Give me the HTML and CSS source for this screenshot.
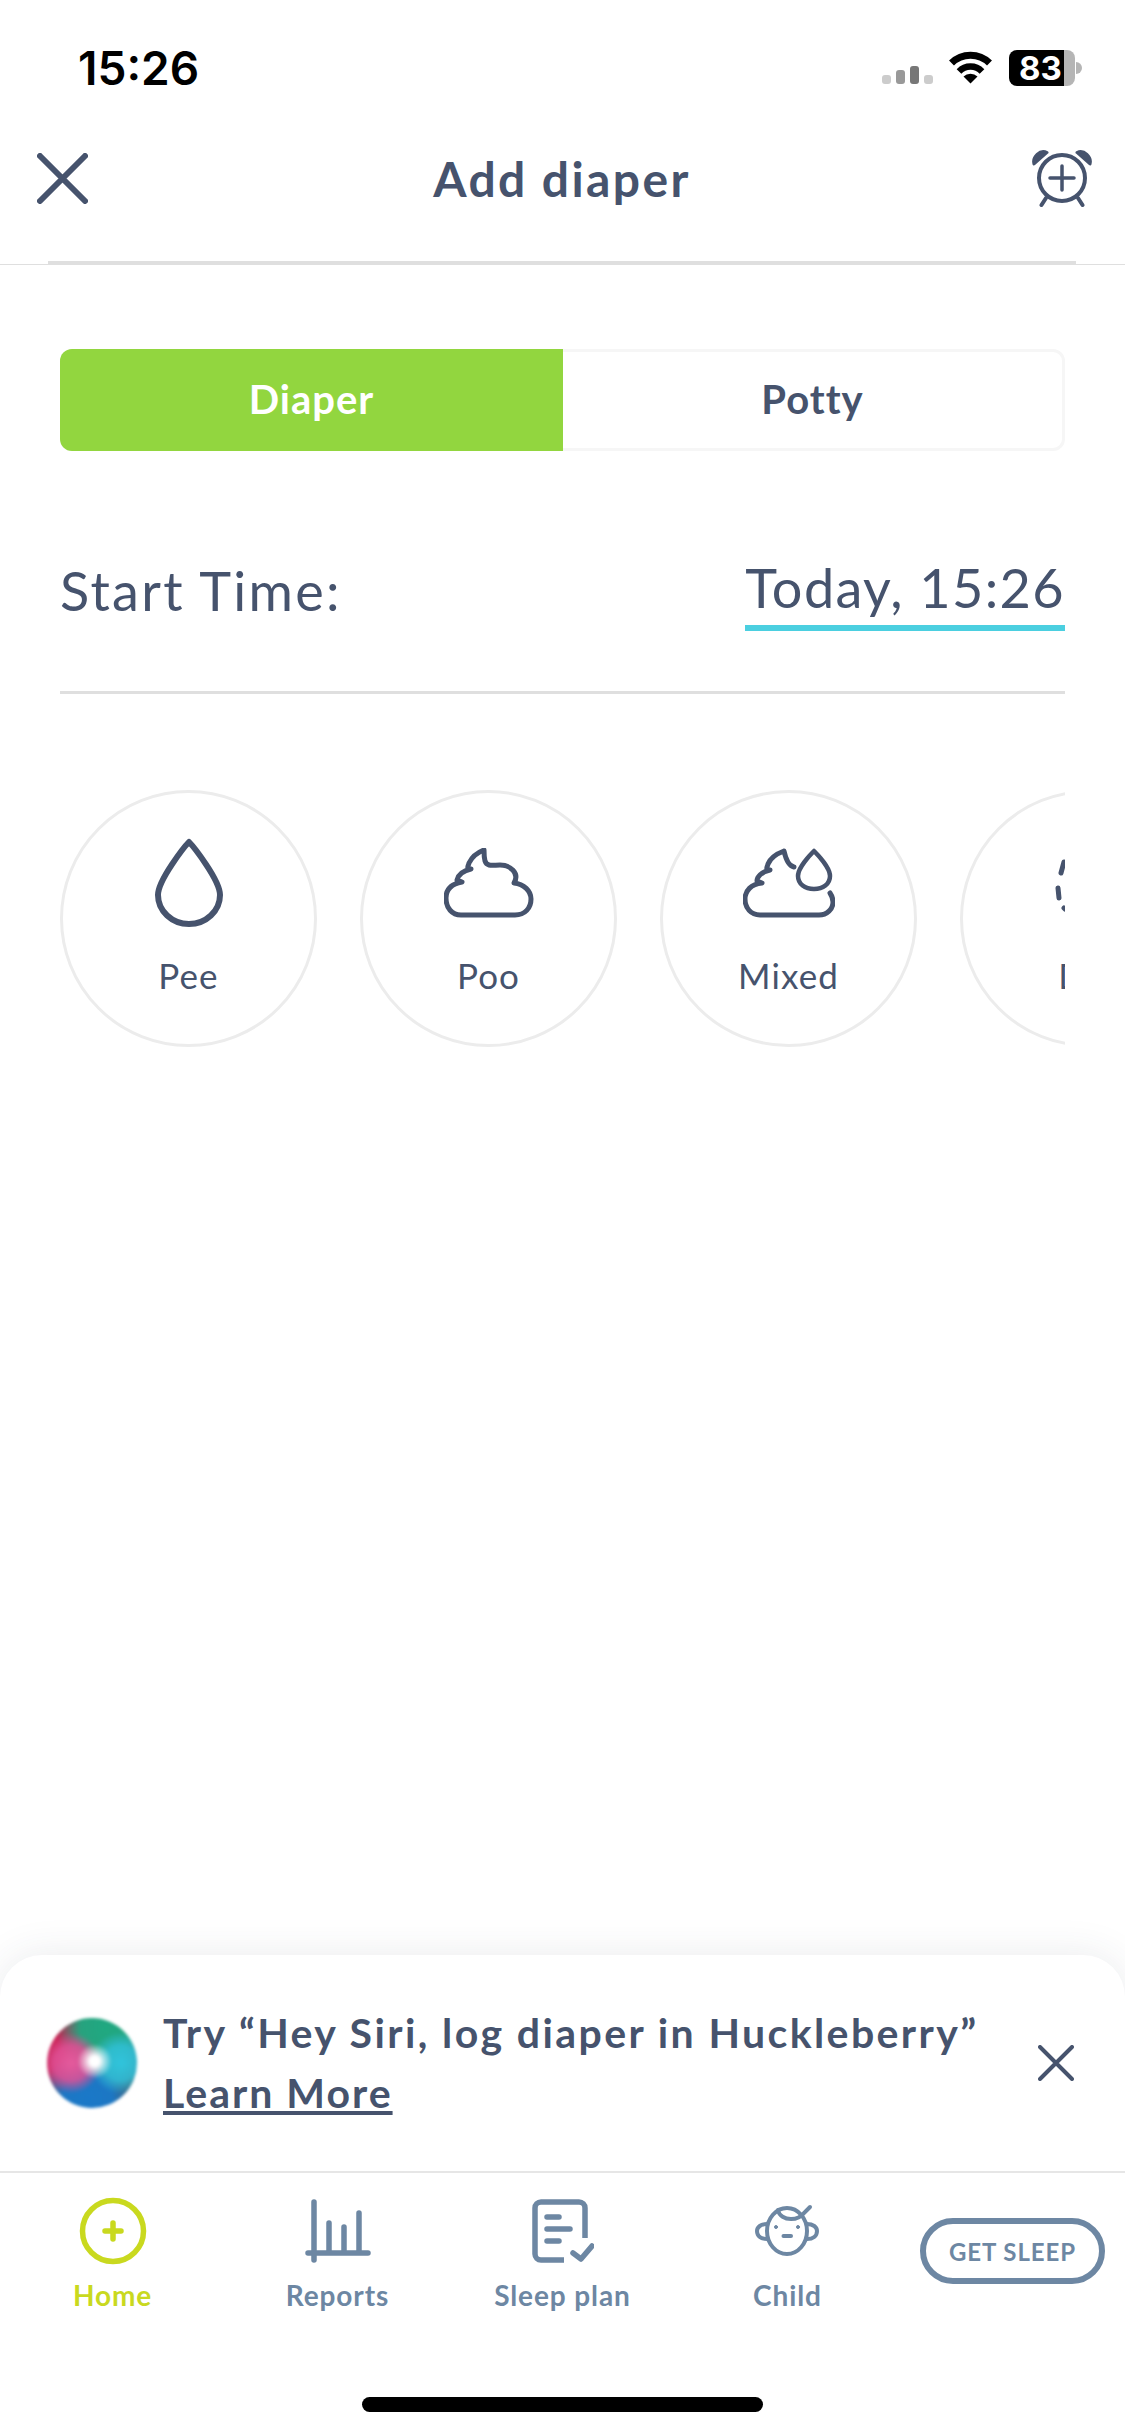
FILE: index.html
```html
<!DOCTYPE html>
<html lang="en">
<head>
  <meta charset="UTF-8">
  <meta name="viewport" content="width=device-width, initial-scale=1.0">
  <title>Add diaper</title>
  <link rel="stylesheet" href="styles.css">
</head>
<body>
  <div class="status-bar">
    <span class="status-time">15:26</span>
    <div class="status-icons">
      <div class="signal">
        <span class="signal-bar bar-1"></span>
        <span class="signal-bar bar-2"></span>
        <span class="signal-bar bar-3"></span>
        <span class="signal-bar bar-4"></span>
      </div>
      <svg class="wifi" width="45" height="34" viewBox="0 0 45 34">
        <path d="M3.5 13A27 27 0 0 1 41.5 13" fill="none" stroke="#000" stroke-width="7"/>
        <path d="M11 21.5A16 16 0 0 1 34 21.5" fill="none" stroke="#000" stroke-width="6.5"/>
        <path d="M22.5 33.5L15.5 26.5A10 10 0 0 1 29.5 26.5Z" fill="#000"/>
      </svg>
      <div class="battery">
        <span class="battery-body">83</span>
        <span class="battery-nub"></span>
      </div>
    </div>
  </div>

  <header class="top-bar">
    <svg class="icon-close" width="51" height="51" viewBox="0 0 51 51" fill="none" stroke="#46536d" stroke-width="6" stroke-linecap="round">
      <path d="M3 3L48 48M48 3L3 48"/>
    </svg>
    <h1 class="top-title">Add diaper</h1>
    <svg class="icon-alarm" width="60" height="58" viewBox="0 0 60 58" fill="none" stroke="#46536d" stroke-linecap="round">
      <circle cx="30" cy="29" r="23" stroke-width="4"/>
      <path d="M30 17V41M18 29H42" stroke-width="3.5"/>
      <path d="M14 49L9.500 56M46 49L50.500 56" stroke-width="4"/>
      <path d="M2 15C0 8 8 0 15 3.500Z" fill="#46536d" stroke-width="3" stroke-linejoin="round"/>
      <path d="M58 15C60 8 52 0 45 3.500Z" fill="#46536d" stroke-width="3" stroke-linejoin="round"/>
    </svg>
  </header>
  <div class="top-rule"></div>
  <div class="top-line"></div>

  <main class="content">
    <div class="segment">
      <div class="segment-item active">Diaper</div>
      <div class="segment-item">Potty</div>
    </div>

    <div class="time-row">
      <span class="time-label">Start Time:</span>
      <span class="time-value">Today, 15:26</span>
    </div>

    <div class="type-list">
      <div class="type-item">
        <div class="type-icon">
          <svg width="70" height="90" viewBox="0 0 70 90" fill="none" stroke="#46536d" stroke-width="6" stroke-linejoin="round">
            <path d="M35 4C31 8 4 42 4 57C4 73 18 86 35 86C52 86 66 73 66 57C66 42 39 8 35 4Z"/>
          </svg>
        </div>
        <span class="type-label">Pee</span>
      </div>
      <div class="type-item">
        <div class="type-icon">
          <svg width="90" height="70" viewBox="0 0 90 70" fill="none" stroke="#46536d" stroke-width="5" stroke-linejoin="round" stroke-linecap="round">
            <path d="M17 67H71C81 67 87 60 87 51C87 43 80 36 70 35C76 25 66 17 56 17C49 17 43 19 41 13C40 9 40 5 40 2C32 5 27 11 25 15C24 19 22 20 27 21C18 23 14 28 13 32L18 34C7 36 2 42 2 50C2 60 8 67 17 67Z"/>
          </svg>
        </div>
        <span class="type-label">Poo</span>
      </div>
      <div class="type-item">
        <div class="type-icon">
          <svg width="92" height="70" viewBox="0 0 92 70" fill="none" stroke="#46536d" stroke-width="5" stroke-linejoin="round" stroke-linecap="round">
            <path d="M51 19C46 18 43 12 41 3C33 6 27 11 25 16C24 20 22 21 27 22C18 24 14 29 14 33L19 35C8 36 2 43 2 51C2 60 8 67 17 67H76C84 67 90 61 90 54C90 51 89 48 87 45"/>
            <path d="M71 3C67 7 55 20 55 28C55 36 62 41 71 41C80 41 87 36 87 28C87 20 75 7 71 3Z" stroke-width="4.500"/>
          </svg>
        </div>
        <span class="type-label">Mixed</span>
      </div>
      <div class="type-item">
        <div class="type-icon">
          <svg width="68" height="70" viewBox="0 0 68 70" fill="none" stroke="#46536d" stroke-width="5" stroke-linecap="round">
            <path d="M9 14L6 25M3 40L4 50M9 60L10 61M59 14L62 25M65 40L64 50M59 60L58 61"/>
          </svg>
        </div>
        <span class="type-label">Dry</span>
      </div>
    </div>
  </main>

  <section class="siri-banner">
    <div class="siri-orb"></div>
    <div class="siri-text">
      <div>Try “Hey Siri, log diaper in Huckleberry”</div>
      <a class="siri-link" href="#">Learn More</a>
    </div>
    <svg width="36" height="36" viewBox="0 0 36 36" fill="none" stroke="#46536d" stroke-width="4" stroke-linecap="round">
      <path d="M2 2L34 34M34 2L2 34"/>
    </svg>
  </section>

  <nav class="tab-bar">
    <div class="tabs">
      <div class="tab active">
        <div class="tab-icon">
          <svg width="68" height="68" viewBox="0 0 68 68" fill="none" stroke="#c9d91f" stroke-linecap="round">
            <circle cx="34" cy="34" r="30.500" stroke-width="5.500"/>
            <path d="M34 26V42M26 34H42" stroke-width="5.500"/>
          </svg>
        </div>
        <span class="tab-label">Home</span>
      </div>
      <div class="tab">
        <div class="tab-icon">
          <svg width="66" height="64" viewBox="0 0 66 64" fill="none" stroke="#6d87a3" stroke-width="5.500" stroke-linecap="round">
            <path d="M9 3V61M3 54H63M24 24V54M39 28V54M54 14V54"/>
          </svg>
        </div>
        <span class="tab-label">Reports</span>
      </div>
      <div class="tab">
        <div class="tab-icon">
          <svg width="62" height="64" viewBox="0 0 62 64" fill="none" stroke="#6d87a3" stroke-width="5.500" stroke-linecap="round" stroke-linejoin="round">
            <path d="M53 39V9A6 6 0 0 0 47 3H9A6 6 0 0 0 3 9V55A6 6 0 0 0 9 61H32" stroke-linecap="butt"/>
            <path d="M15 18H27M15 30H38M15 42H27"/>
            <path d="M41 54L49 60L60 47"/>
          </svg>
        </div>
        <span class="tab-label">Sleep plan</span>
      </div>
      <div class="tab">
        <div class="tab-icon">
          <svg width="66" height="54" viewBox="0 0 66 54" fill="none" stroke="#6d87a3" stroke-width="4" stroke-linecap="round">
            <ellipse cx="32" cy="27" rx="20" ry="23"/>
            <path d="M12 20C6 20 2 23 2 27C2 32 6 35 12 35M52 20C58 20 62 23 62 27C62 32 58 35 52 35"/>
            <path d="M23 6C24 12 30 15 36 15C42 15 46 13 49 9L55 3"/>
            <path d="M28.500 32H36"/>
            <circle cx="21" cy="23" r="1.500" fill="#6d87a3" stroke-width="1"/>
            <circle cx="43" cy="23" r="1.500" fill="#6d87a3" stroke-width="1"/>
          </svg>
        </div>
        <span class="tab-label">Child</span>
      </div>
      <a class="sleep-btn" href="#">GET SLEEP</a>
    </div>
    <div class="home-indicator"></div>
  </nav>
</body>
</html>
```

FILE: styles.css
```css
:root {
  --text: #46536d;
  --muted: #6d87a3;
  --green: #92d63f;
  --lime: #c9d91f;
  --cyan: #4bcfe0;
  --line: #dfdfdf;
}

* {
  margin: 0;
  padding: 0;
  box-sizing: border-box;
}

body {
  width: 1125px;
  height: 2436px;
  display: flex;
  flex-direction: column;
  background: #fff;
  color: var(--text);
  font-family: 'Lato', 'Noto Sans', sans-serif;
  overflow: hidden;
}

/* status bar */
.status-bar {
  display: flex;
  align-items: center;
  justify-content: space-between;
  height: 90px;
  padding: 46px 43px 0 78px;
}

.status-time {
  color: #000;
  font-family: 'Inter', sans-serif;
  font-size: 46px;
  font-weight: 600;
  line-height: 44px;
}

.status-icons {
  display: flex;
  align-items: flex-end;
}

.signal {
  display: flex;
  align-items: flex-end;
  gap: 5px;
  margin-right: 15px;
  margin-bottom: 2px;
}

.signal-bar {
  width: 9px;
  border-radius: 3px;
}

.bar-1 { height: 9px; background: #ccc; }
.bar-2 { height: 14px; background: #999; }
.bar-3 { height: 18px; background: #777; }
.bar-4 { height: 9px; background: #ccc; }

.wifi {
  margin-right: 16px;
  margin-bottom: 2px;
}

.battery {
  display: flex;
  align-items: center;
}

.battery-body {
  width: 66px;
  height: 36px;
  padding-left: 10px;
  border-radius: 8px;
  background: linear-gradient(90deg, #000 83%, #b5b5b5 83%);
  color: #fff;
  font-family: 'Inter', sans-serif;
  font-size: 33px;
  font-weight: 700;
  line-height: 36px;
}

.battery-nub {
  width: 6px;
  height: 12px;
  margin-left: 1px;
  border-radius: 0 6px 6px 0;
  background: #b5b5b5;
}

/* top bar */
.top-bar {
  display: flex;
  align-items: center;
  height: 171px;
  padding: 5px 33px 0 37px;
}

.top-title {
  flex: 1;
  margin-left: 4px;
  font-size: 48px;
  font-weight: 700;
  letter-spacing: 2.4px;
  text-align: center;
}

.top-rule {
  height: 3px;
  margin: 0 49px 0 48px;
  background: var(--line);
}

.top-line {
  height: 1px;
  background: var(--line);
}

/* form */
.content {
  flex: 1;
  min-height: 0;
  padding: 84px 60px 0 60px;
}

.segment {
  display: flex;
  height: 102px;
  border: 3px solid #f6f6f6;
  border-radius: 12px;
  font-size: 40px;
  font-weight: 700;
  letter-spacing: 1px;
}

.segment-item {
  flex: 1;
  display: flex;
  align-items: center;
  justify-content: center;
  padding-bottom: 2px;
}

.segment-item.active {
  flex: 0 0 503px;
  margin: -3px 0 -3px -3px;
  border-radius: 12px 0 0 12px;
  background: var(--green);
  color: #fff;
}

.time-row {
  display: flex;
  align-items: flex-end;
  justify-content: space-between;
  height: 243px;
  padding-bottom: 60px;
  border-bottom: 3px solid var(--line);
  font-size: 54px;
  letter-spacing: 1.4px;
}

.time-label {
  padding-bottom: 8px;
  letter-spacing: 2.3px;
}

.time-value {
  padding-bottom: 5px;
  border-bottom: 6px solid var(--cyan);
}

.type-list {
  display: flex;
  gap: 43px;
  margin-top: 96px;
  overflow: hidden;
}

.type-item {
  flex: 0 0 257px;
  height: 257px;
  display: flex;
  flex-direction: column;
  align-items: center;
  padding-top: 45px;
  border: 3px solid #ececec;
  border-radius: 50%;
}

.type-icon {
  height: 90px;
  display: flex;
  align-items: center;
  justify-content: center;
}

.type-label {
  margin-top: 26px;
  font-size: 35px;
  letter-spacing: 1.1px;
  line-height: 42px;
}

/* siri */
.siri-banner {
  position: relative;
  display: flex;
  align-items: center;
  height: 216px;
  padding: 0 51px 0 47px;
  border-radius: 42px 42px 0 0;
  background: #fff;
  box-shadow: 0 0 40px rgba(50, 60, 80, 0.1);
}

.siri-orb {
  flex: 0 0 90px;
  height: 90px;
  margin-right: 26px;
  border-radius: 50%;
  background:
    radial-gradient(circle at 53% 48%, #fff 0, #fff 7%, rgba(255, 255, 255, 0.6) 14%, rgba(255, 255, 255, 0) 26%),
    radial-gradient(circle at 27% 50%, #e45a9c 0, rgba(224, 80, 150, 0.85) 22%, rgba(224, 80, 150, 0) 38%),
    radial-gradient(circle at 82% 50%, #30c4dc 0, rgba(48, 192, 216, 0.85) 20%, rgba(48, 192, 216, 0) 36%),
    radial-gradient(circle at 65% 12%, #20a880 0, rgba(32, 168, 128, 0.95) 26%, rgba(32, 168, 128, 0) 50%),
    radial-gradient(circle at 45% 90%, #1a78c8 0, rgba(26, 120, 200, 0.95) 26%, rgba(26, 120, 200, 0) 50%),
    radial-gradient(circle at 10% 30%, #c82050 0, rgba(200, 32, 80, 0.95) 26%, rgba(200, 32, 80, 0) 55%),
    #46606e;
  filter: blur(1.5px);
}

.siri-text {
  flex: 1;
  font-size: 41px;
  font-weight: 700;
  letter-spacing: 2.4px;
  line-height: 60px;
}

.siri-link {
  color: var(--text);
  letter-spacing: 2px;
}

/* tabs */
.tab-bar {
  flex: 0 0 265px;
  display: flex;
  flex-direction: column;
  position: relative;
  background: #fff;
  border-top: 2px solid #e6e6e6;
}

.tabs {
  display: grid;
  grid-template-columns: repeat(5, 225px);
  padding-top: 24px;
}

.tab {
  display: flex;
  flex-direction: column;
  align-items: center;
  color: var(--muted);
}

.tab.active {
  color: var(--lime);
}

.tab-icon {
  height: 68px;
  display: flex;
  align-items: center;
  justify-content: center;
}

.tab-label {
  margin-top: 13px;
  font-size: 28px;
  font-weight: 700;
  letter-spacing: 0.9px;
  line-height: 34px;
}

.sleep-btn {
  justify-self: center;
  align-self: start;
  display: flex;
  align-items: center;
  justify-content: center;
  width: 185px;
  height: 66px;
  margin-top: 21px;
  border: 6px solid var(--muted);
  border-radius: 33px;
  color: var(--muted);
  font-size: 24px;
  font-weight: 700;
  letter-spacing: 0.9px;
  text-decoration: none;
}

.home-indicator {
  width: 401px;
  height: 15px;
  margin: auto 0 24px 362px;
  border-radius: 8px;
  background: #000;
}
```
